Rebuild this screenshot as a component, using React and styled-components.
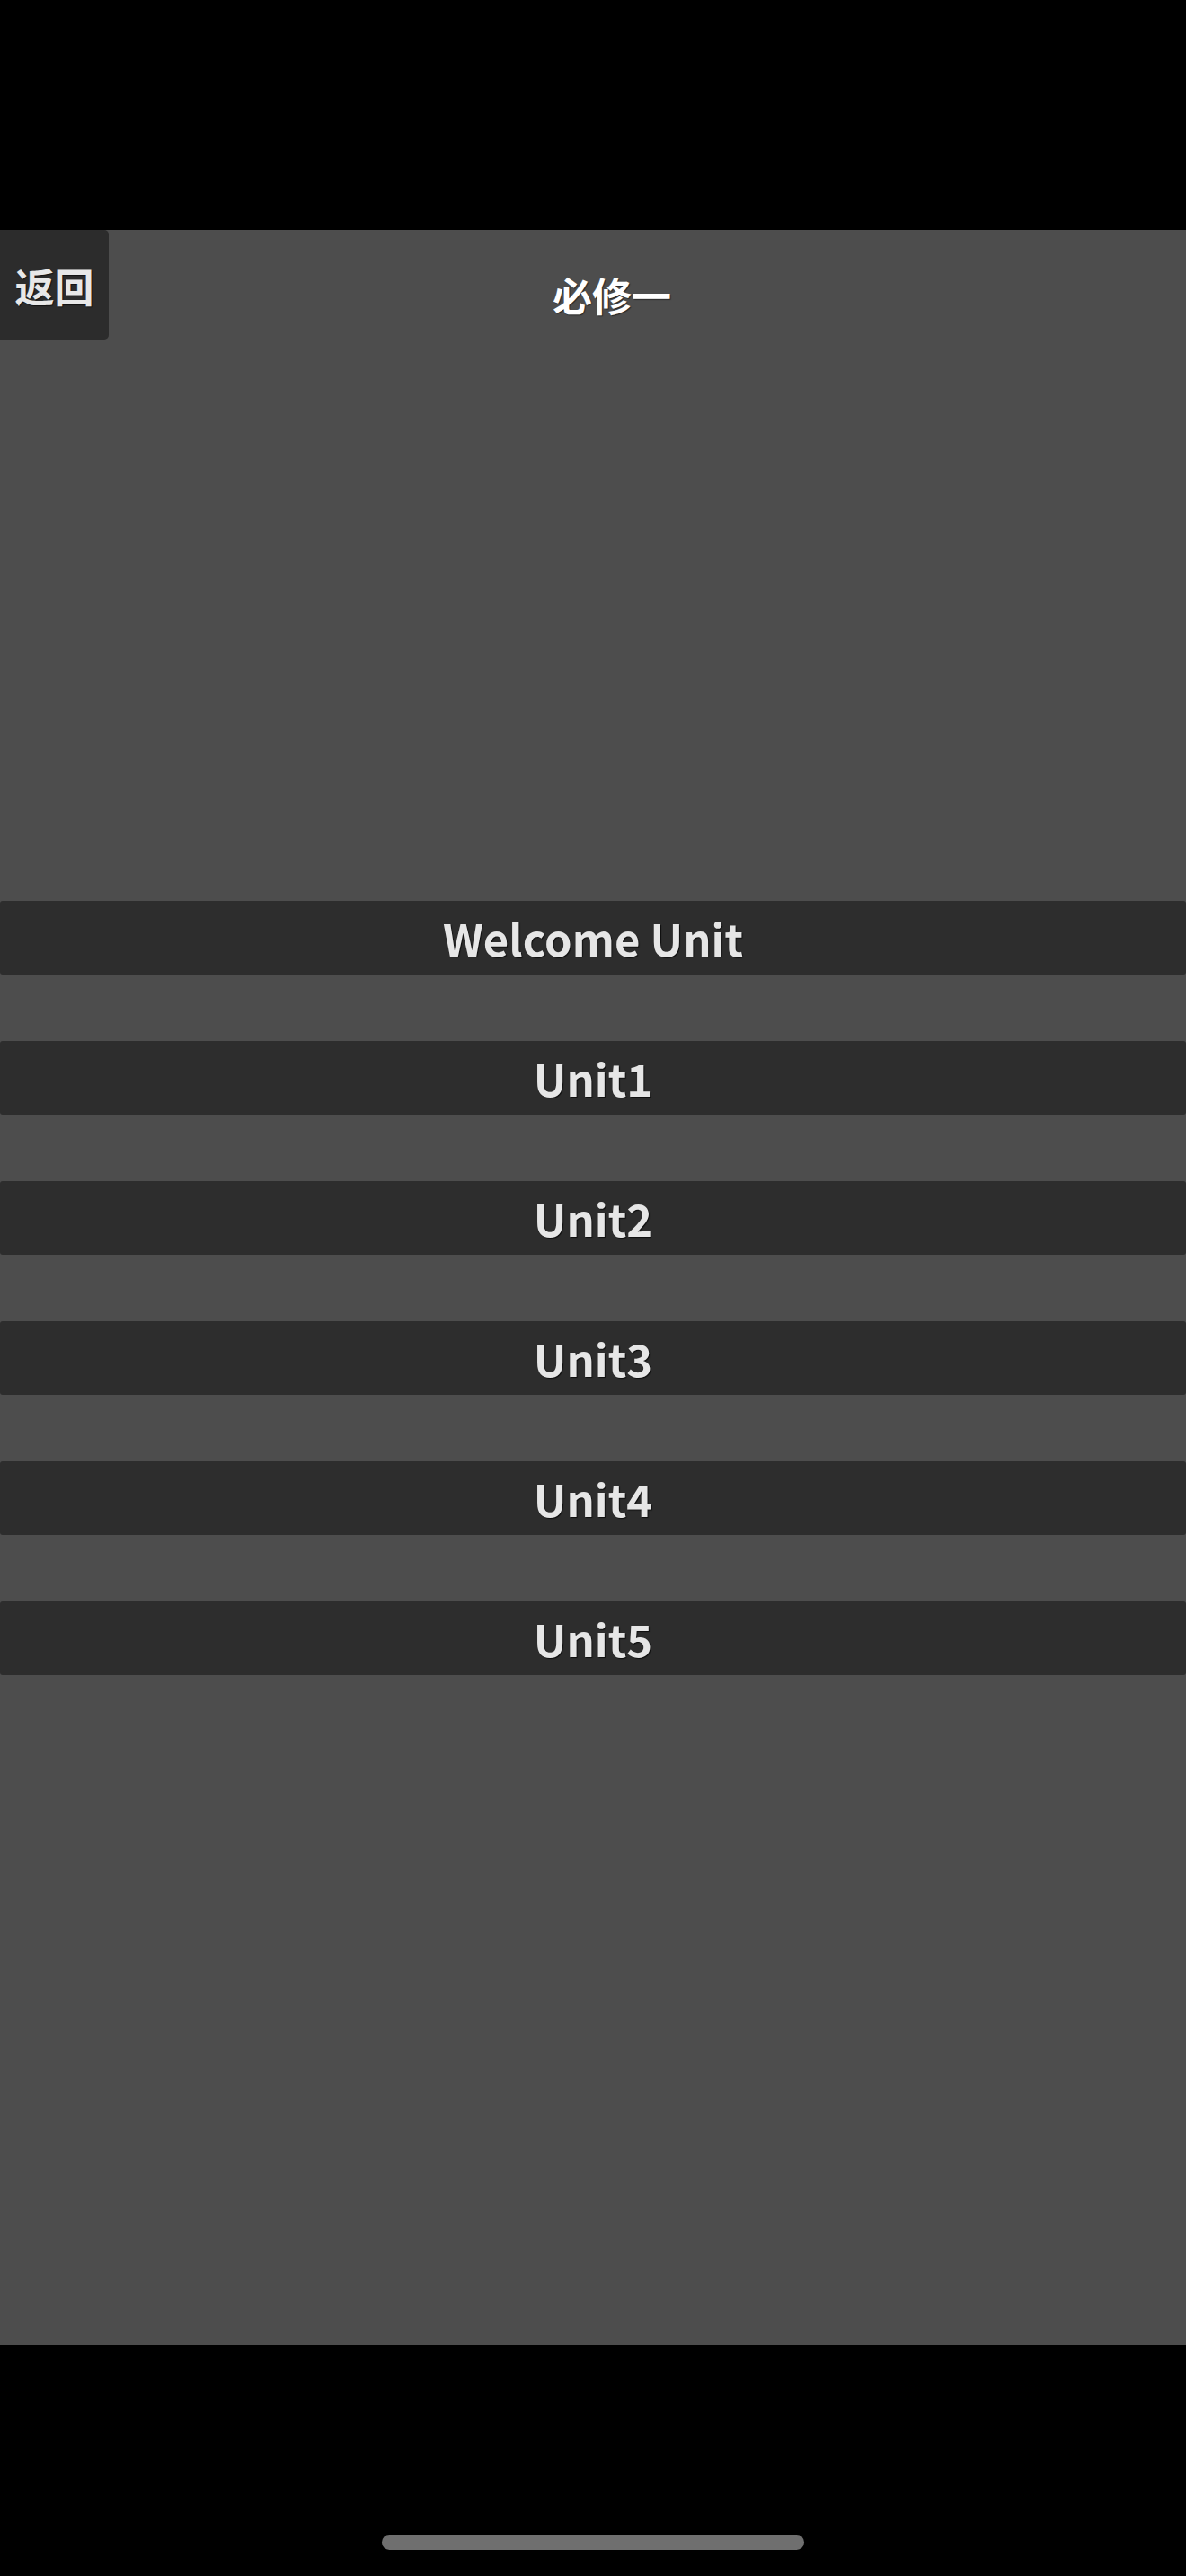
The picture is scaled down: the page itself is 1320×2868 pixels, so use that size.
import React from "react";
import styled, { createGlobalStyle } from "styled-components";

const GlobalStyle = createGlobalStyle`
  html, body { margin: 0; padding: 0; background: #000; }
  body { font-family: "Noto Sans CJK SC", "Noto Sans", sans-serif; }
  * { box-sizing: border-box; }
`;

const Screen = styled.div`
  width: 1320px;
  height: 2868px;
  background: #000;
  display: flex;
  flex-direction: column;
`;

const StatusBar = styled.div`
  height: 256px;
  flex: none;
`;

const Content = styled.main`
  height: 2355px;
  flex: none;
  background: #4d4d4d;
  display: flex;
  flex-direction: column;
`;

const Header = styled.header`
  height: 122px;
  display: flex;
  align-items: stretch;
`;

const BackButton = styled.button`
  width: 121px;
  border: none;
  margin: 0;
  padding: 2px 0 0 0;
  background: #2c2c2c;
  border-radius: 0 5px 5px 0;
  color: #e8e8e8;
  font-family: "Noto Sans CJK SC", sans-serif;
  font-weight: 700;
  font-size: 44px;
  line-height: 1;
  text-shadow: 1px 1px 1px rgba(0, 0, 0, 0.6);
  display: flex;
  align-items: center;
  justify-content: center;
`;

const Title = styled.h1`
  flex: 1;
  margin: 0;
  padding: 50px 79px 0 0;
  text-align: center;
  color: #ffffff;
  font-weight: 700;
  font-size: 44px;
  line-height: 1;
  text-shadow: 1px 1px 1px rgba(0, 0, 0, 0.5);
`;

const UnitList = styled.ul`
  list-style: none;
  margin: 625px 0 0 0;
  padding: 0;
  display: flex;
  flex-direction: column;
  gap: 74px;
`;

const UnitRow = styled.li`
  height: 82px;
  background: #2d2d2d;
  border-radius: 3px;
  display: flex;
  align-items: center;
  justify-content: center;
  color: #e6e6e6;
  font-weight: 700;
  font-size: 49px;
  line-height: 1;
  text-shadow: 1px 1px 1px rgba(0, 0, 0, 0.7);
  padding-bottom: 2px;
`;

const HomeArea = styled.div`
  flex: 1;
  display: flex;
  align-items: flex-end;
  justify-content: center;
  padding-bottom: 29px;
`;

const HomeIndicator = styled.div`
  width: 470px;
  height: 17px;
  border-radius: 9px;
  background: #6f6f6f;
`;

const units = ["Welcome Unit", "Unit1", "Unit2", "Unit3", "Unit4", "Unit5"];

export default function App() {
  return (
    <>
      <GlobalStyle />
      <Screen>
        <StatusBar />
        <Content>
          <Header>
            <BackButton>返回</BackButton>
            <Title>必修一</Title>
          </Header>
          <UnitList>
            {units.map((u) => (
              <UnitRow key={u}>{u}</UnitRow>
            ))}
          </UnitList>
        </Content>
        <HomeArea>
          <HomeIndicator />
        </HomeArea>
      </Screen>
    </>
  );
}
